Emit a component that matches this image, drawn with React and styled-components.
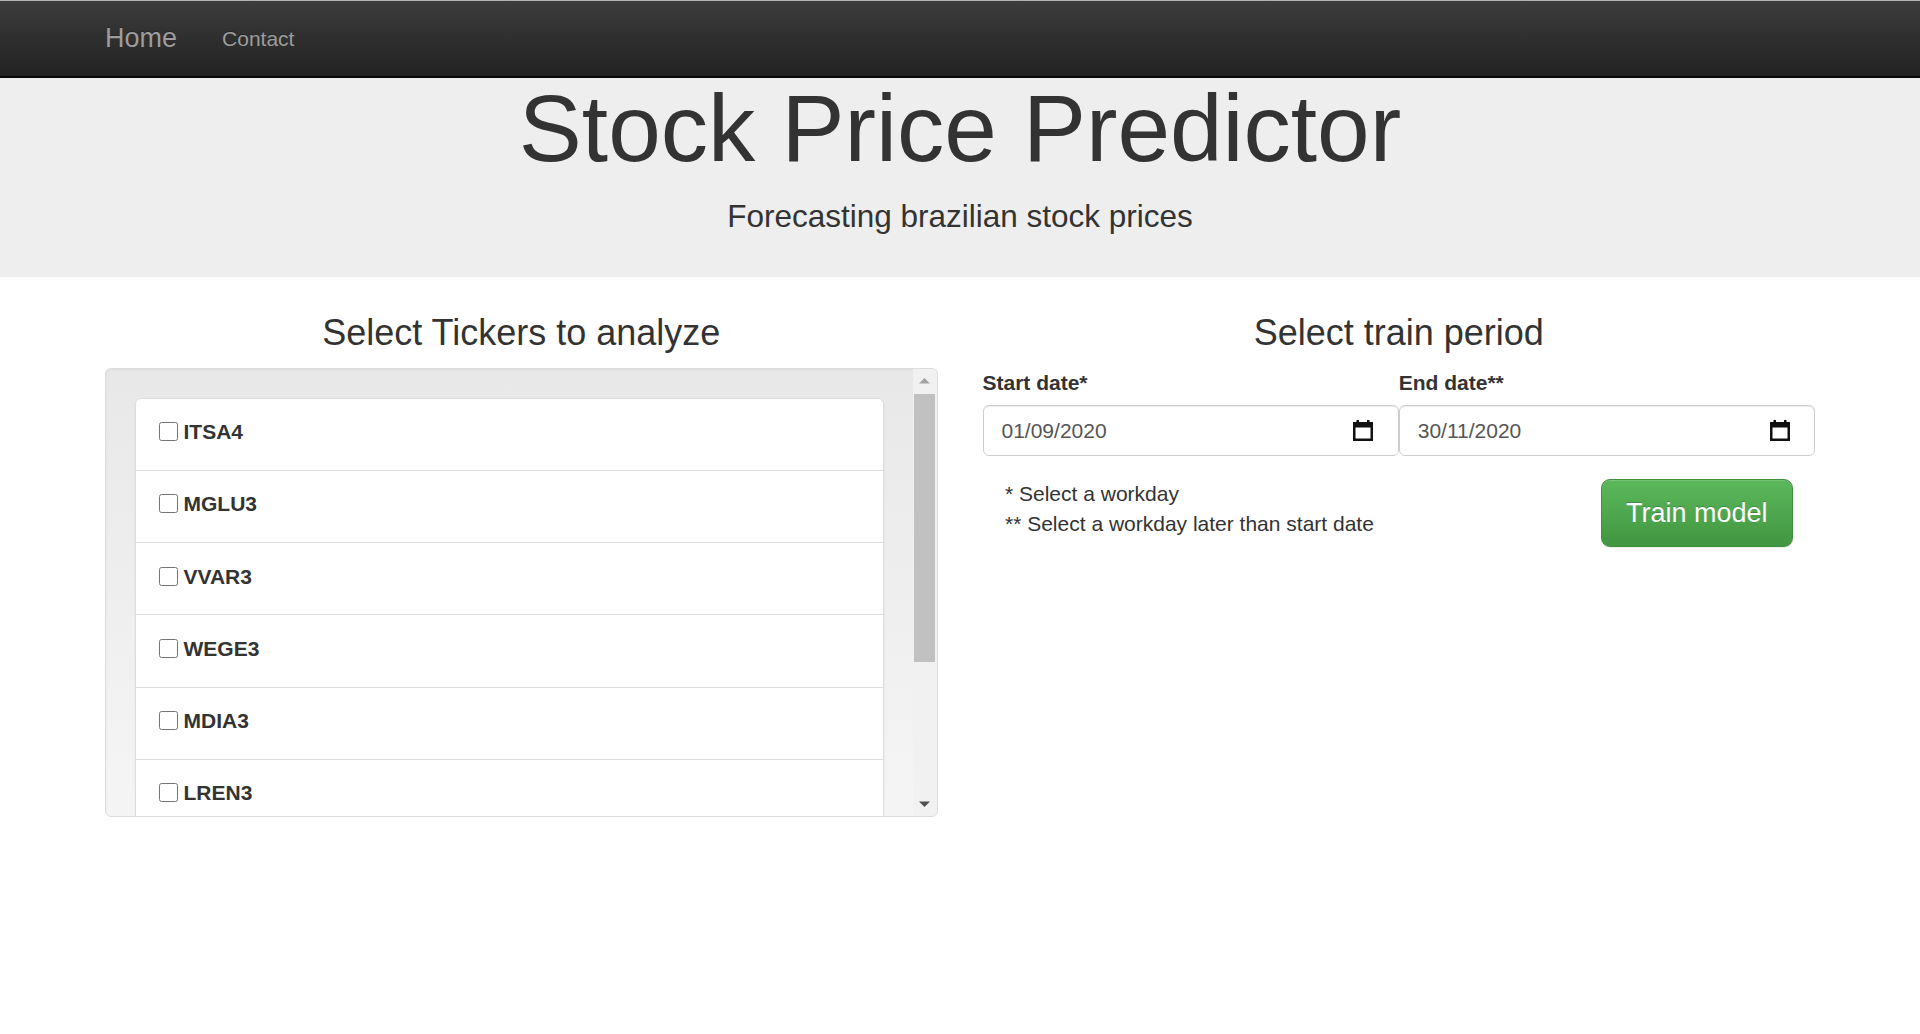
import React, { useState } from "react";
import styled, { createGlobalStyle } from "styled-components";

const GlobalStyle = createGlobalStyle`
  * { box-sizing: border-box; }
  body {
    margin: 0;
    font-family: "Liberation Sans", Arial, Helvetica, sans-serif;
    font-size: 21px;
    line-height: 30px;
    color: #333;
    background: #fff;
  }
`;

const Navbar = styled.nav({
  height: "78px",
  borderTop: "1px solid #b4b4b4",
  borderBottom: "2px solid #080808",
  background: "linear-gradient(to bottom, #3c3c3c 0, #222 100%)",
});

const NavContainer = styled.div({
  width: "1755px",
  height: "100%",
  margin: "0 auto",
  padding: "0 22.5px",
  display: "flex",
  alignItems: "center",
});

const Brand = styled.a({
  fontSize: "27px",
  lineHeight: "75px",
  color: "#9d9d9d",
  textDecoration: "none",
  paddingRight: "22.5px",
  textShadow: "0 -1px 0 rgba(0,0,0,.25)",
});

const NavLink = styled.a({
  fontSize: "21px",
  lineHeight: "75px",
  color: "#9d9d9d",
  textDecoration: "none",
  padding: "0 22.5px",
  textShadow: "0 -1px 0 rgba(0,0,0,.25)",
});

const Jumbotron = styled.header({
  background: "#eee",
  textAlign: "center",
  padding: "0 0 38px",
  "& h1": {
    fontSize: "94.5px",
    lineHeight: "100px",
    fontWeight: 400,
    margin: "0 0 16px",
  },
  "& p": {
    fontSize: "31.5px",
    lineHeight: "45px",
    margin: 0,
  },
});

const Main = styled.main({
  width: "1755px",
  margin: "0 auto",
  padding: "0 22.5px",
  display: "grid",
  gridTemplateColumns: "1fr 1fr",
  columnGap: "45px",
});

const SectionTitle = styled.h3({
  fontSize: "36px",
  lineHeight: "39.6px",
  fontWeight: 400,
  textAlign: "center",
  margin: "36px 0 15px",
});

const Well = styled.div({
  height: "449px",
  display: "flex",
  overflow: "hidden",
  border: "1px solid #dcdcdc",
  borderRadius: "6px",
  background: "linear-gradient(to bottom, #e8e8e8 0, #f5f5f5 100%)",
  boxShadow: "inset 0 1px 3px rgba(0,0,0,.05), 0 1px 0 rgba(255,255,255,.1)",
});

const WellViewport = styled.div({
  flex: 1,
  overflow: "hidden",
  padding: "29px 29px 0",
});

const ScrollBar = styled.div({
  width: "24px",
  background: "#f1f1f1",
  display: "flex",
  flexDirection: "column",
});

const ScrollArrow = styled.div({
  height: "24px",
  display: "flex",
  alignItems: "center",
  justifyContent: "center",
});

const ScrollTrack = styled.div({
  flex: 1,
  padding: "1px 1.5px 0",
});

const ScrollThumb = styled.div({
  height: "268px",
  background: "#c1c1c1",
});

const ListGroup = styled.ul({
  margin: "0 0 30px",
  padding: 0,
  listStyle: "none",
  borderRadius: "6px",
  boxShadow: "0 1px 2px rgba(0,0,0,.075)",
});

const ListItem = styled.li({
  background: "#fff",
  border: "1px solid #ddd",
  marginBottom: "-1px",
  padding: "18.5px 22.5px 22.75px",
  "&:first-child": { borderRadius: "6px 6px 0 0" },
  "&:last-child": { borderRadius: "0 0 6px 6px", marginBottom: 0 },
});

const TickerLabel = styled.label({
  fontWeight: 700,
  cursor: "pointer",
});

const Check = styled.input({
  width: "19px",
  height: "19px",
  margin: "0 6px 0 0",
  verticalAlign: "-2px",
});

const FieldRow = styled.div({
  display: "grid",
  gridTemplateColumns: "1fr 1fr",
});

const FieldLabel = styled.label({
  display: "block",
  fontWeight: 700,
  marginBottom: "7.5px",
});

const DateBox = styled.div({
  height: "51px",
  padding: "0 18px",
  border: "1.5px solid #ccc",
  borderRadius: "6px",
  background: "#fff",
  color: "#555",
  display: "flex",
  alignItems: "center",
  justifyContent: "space-between",
  boxShadow: "inset 0 1px 1px rgba(0,0,0,.075)",
  "& svg": { marginRight: "6.5px" },
});

const ActionRow = styled.div({
  display: "flex",
  justifyContent: "space-between",
  alignItems: "flex-start",
  padding: "0 22.5px",
  marginTop: "22.5px",
});

const Notes = styled.div({
  "& p": { margin: 0 },
});

const TrainButton = styled.button({
  fontFamily: "inherit",
  fontSize: "27px",
  lineHeight: "36px",
  padding: "15px 24px",
  color: "#fff",
  border: "1.5px solid #3e8f3e",
  borderRadius: "9px",
  background: "linear-gradient(to bottom, #5cb85c 0, #419641 100%)",
  textShadow: "0 -1px 0 rgba(0,0,0,.2)",
  boxShadow: "inset 0 1px 0 rgba(255,255,255,.15), 0 1px 1px rgba(0,0,0,.075)",
  cursor: "pointer",
});

const CalendarIcon = () => (
  <svg width="20" height="21" viewBox="0 0 20 21">
    <rect x="3.5" y="0" width="2.5" height="4" fill="#111" />
    <rect x="14" y="0" width="2.5" height="4" fill="#111" />
    <rect x="1.25" y="3.25" width="17.5" height="16.5" fill="none" stroke="#111" strokeWidth="2.5" />
    <rect x="1" y="3" width="18" height="4.5" fill="#111" />
  </svg>
);

const Arrow = ({ up, color }) => (
  <svg width="11" height="6" viewBox="0 0 11 6">
    <polygon points={up ? "0,5.5 11,5.5 5.5,0" : "0,0.5 11,0.5 5.5,6"} fill={color} />
  </svg>
);

const tickers = ["ITSA4", "MGLU3", "VVAR3", "WEGE3", "MDIA3", "LREN3", "PETR4", "BBDC4"];

function DateField({ label, value }) {
  return (
    <div>
      <FieldLabel>{label}</FieldLabel>
      <DateBox>
        <span>{value}</span>
        <CalendarIcon />
      </DateBox>
    </div>
  );
}

function App() {
  const [selected, setSelected] = useState({});

  const toggle = (t) => setSelected((s) => ({ ...s, [t]: !s[t] }));

  return (
    <>
      <GlobalStyle />
      <Navbar>
        <NavContainer>
          <Brand href="#">Home</Brand>
          <NavLink href="#">Contact</NavLink>
        </NavContainer>
      </Navbar>
      <Jumbotron>
        <h1>Stock Price Predictor</h1>
        <p>Forecasting brazilian stock prices</p>
      </Jumbotron>
      <Main>
        <section>
          <SectionTitle>Select Tickers to analyze</SectionTitle>
          <Well>
            <WellViewport>
              <ListGroup>
                {tickers.map((t) => (
                  <ListItem key={t}>
                    <TickerLabel>
                      <Check
                        type="checkbox"
                        checked={!!selected[t]}
                        onChange={() => toggle(t)}
                      />
                      {t}
                    </TickerLabel>
                  </ListItem>
                ))}
              </ListGroup>
            </WellViewport>
            <ScrollBar>
              <ScrollArrow>
                <Arrow up color="#a3a3a3" />
              </ScrollArrow>
              <ScrollTrack>
                <ScrollThumb />
              </ScrollTrack>
              <ScrollArrow>
                <Arrow color="#505050" />
              </ScrollArrow>
            </ScrollBar>
          </Well>
        </section>
        <section>
          <SectionTitle>Select train period</SectionTitle>
          <FieldRow>
            <DateField label="Start date*" value="01/09/2020" />
            <DateField label="End date**" value="30/11/2020" />
          </FieldRow>
          <ActionRow>
            <Notes>
              <p>* Select a workday</p>
              <p>** Select a workday later than start date</p>
            </Notes>
            <TrainButton>Train model</TrainButton>
          </ActionRow>
        </section>
      </Main>
    </>
  );
}

export default App;
